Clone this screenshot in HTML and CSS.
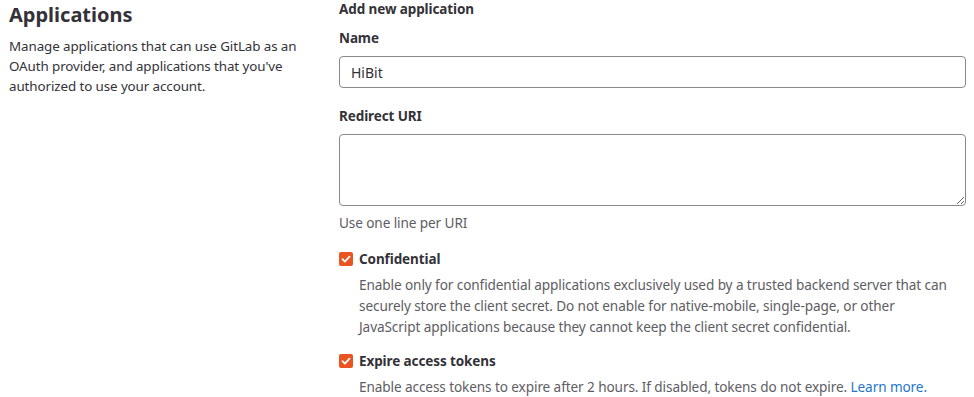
FILE: index.html
```html
<!DOCTYPE html>
<html lang="en">
<head>
	<meta charset="UTF-8">
	<title>Applications</title>
	<link rel="stylesheet" href="styles.css">
</head>
<body>
<div class="page">
   <div class="side">
      <h4 class="title">Applications</h4>
      <p class="lead">Manage applications that can use GitLab as an OAuth provider, and applications that you've authorized to use your account.</p>
   </div>
   <form class="main">
      <h5 class="sub">Add new application</h5>
      <div class="group">
         <label class="label" for="name">Name</label>
         <input class="field" id="name" type="text" value="HiBit">
      </div>
      <div class="group">
         <label class="label" for="uri">Redirect URI</label>
         <textarea class="field area" id="uri"></textarea>
         <div class="help">Use one line per URI</div>
      </div>
      <div class="check">
         <input class="box" id="conf" type="checkbox" checked>
         <div class="check-body">
            <label class="check-label" for="conf">Confidential</label>
            <p class="help">Enable only for confidential applications exclusively used by a trusted backend server that can securely store the client secret. Do not enable for native-mobile, single-page, or other JavaScript applications because they cannot keep the client secret confidential.</p>
         </div>
      </div>
      <div class="check">
         <input class="box" id="exp" type="checkbox" checked>
         <div class="check-body">
            <label class="check-label" for="exp">Expire access tokens</label>
            <p class="help">Enable access tokens to expire after 2 hours. If disabled, tokens do not expire. <a href="#">Learn more.</a></p>
         </div>
      </div>
   </form>
</div>
</body>
</html>
```
FILE: styles.css
```css
/* 左边说明，右边表单 */
html,body{
	margin: 0;
	background: #fff;
}
body{
	font-family: "Noto Sans", "Open Sans", sans-serif;
	font-size: 13px;
	letter-spacing: -0.1px;
	color: #333238;
}
.page{
	display: flex;
	padding: 0 8px 0 9px;
}
.side{
	width: 300px;
	flex: none;
}
.title{
	margin: 2px 0 0;
	font-size: 20px;
	line-height: 26px;
	font-weight: 700;
	letter-spacing: 0;
}
.lead{
	margin: 8px 0 0;
	font-size: 13.4px;
	line-height: 20px;
}
.main{
	flex: 1;
	margin-left: 30px;
}
.sub{
	margin: 0;
	font-size: 13.5px;
	line-height: 18px;
	font-weight: 700;
}
.group{
	margin-top: 10px;
}
.label{
	display: block;
	font-size: 13.5px;
	font-weight: 700;
	line-height: 20px;
	margin-bottom: 8px;
}
.field{
	display: block;
	box-sizing: border-box;
	width: 100%;
	height: 32px;
	padding: 0 11px;
	border: 1px solid #89888d;
	border-radius: 4px;
	font: inherit;
	font-size: 14px;
	color: #333238;
}
.area{
	height: 72px;
	margin-top: 8px;
}
.group + .group{
	margin-top: 18px;
}
.group + .group .label{
	margin-bottom: 0;
}
.help{
	margin: 0;
	color: #5e5d63;
	font-size: 13.6px;
	line-height: 21px;
}
.group .help{
	margin-top: 6px;
}
.check{
	display: flex;
	margin-top: 16px;
}
.check + .check{
	margin-top: 14px;
}
.check .help{
	padding-right: 12px;
}
.box{
	appearance: none;
	flex: none;
	width: 14px;
	height: 14px;
	margin: 3px 6px 0 0;
	border-radius: 2px;
	background: #e95420 url("data:image/svg+xml;utf8,<svg xmlns='http://www.w3.org/2000/svg' viewBox='0 0 14 14'><path d='M3.5 7.2l2.4 2.4 4.6-5' fill='none' stroke='white' stroke-width='1.8' stroke-linecap='round' stroke-linejoin='round'/></svg>") center/14px no-repeat;
}
.check-body{
	flex: 1;
}
.check-label{
	display: block;
	font-size: 13.5px;
	font-weight: 700;
	line-height: 20px;
	margin-bottom: 5px;
}
a{
	color: #1f75cb;
	text-decoration: none;
}
```
